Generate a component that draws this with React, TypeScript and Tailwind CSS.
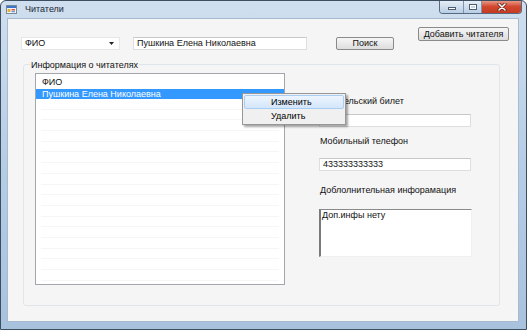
import React from "react";

function AppIcon() {
  return (
    <svg width="11" height="9" viewBox="0 0 11 9">
      <rect x="0.5" y="0.5" width="10" height="8" fill="#f4f4f4" stroke="#7a8a9c" />
      <rect x="1" y="1" width="9" height="2" fill="#3b74c9" />
      <rect x="1.5" y="4" width="3" height="3" fill="#e8b030" />
      <rect x="5.5" y="4" width="3.5" height="1.5" fill="#d9534f" />
      <rect x="5.5" y="6" width="3.5" height="1.2" fill="#5ba0e0" />
    </svg>
  );
}

function TextBox({ w, text, className = "" }: { w: string; text?: string; className?: string }) {
  return (
    <div
      className={`${w} h-[13px] bg-white border border-[#dedede] border-t-[#c8c8c8] flex items-center pl-[3px] leading-[11px] ${className}`}
    >
      {text}
    </div>
  );
}

export default function App() {
  const gridRows = Array.from({ length: 17 });
  return (
    <div className="w-[529px] h-[332px] bg-white font-['Liberation_Sans',Arial,sans-serif] text-[9px] leading-[11px] text-[#111]">
      <div className="w-[527px] h-[330px] flex flex-col rounded-t-[6px] border border-[#3e4e61] bg-gradient-to-b from-[#cfdfef] via-[#b6cde6] to-[#a8c2de] overflow-hidden">
        {/* Title bar */}
        <div className="h-[17px] flex items-start shrink-0">
          <div className="ml-[5px] mt-[4px]">
            <AppIcon />
          </div>
          <div className="ml-[8px] mt-[3px] text-[9px] text-[#1b2633]">Читатели</div>
          <div className="ml-auto mr-[4px] -mt-[1px] flex h-[14px] border border-[#566a82] border-t-0 rounded-b-[4px] overflow-hidden">
            <div className="w-[24px] h-full bg-gradient-to-b from-[#e9f0f8] to-[#b9cde3] border-r border-[#7f93ab] flex items-center justify-center">
              <div className="w-[8px] h-[3px] mt-[4px] bg-white border border-[#4b5d72]" />
            </div>
            <div className="w-[18px] h-full bg-gradient-to-b from-[#e9f0f8] to-[#b9cde3] border-r border-[#7f93ab] flex items-center justify-center">
              <div className="w-[8px] h-[6px] border border-[#4b5d72] bg-white flex items-center justify-center">
                <div className="w-[4px] h-[2px] bg-[#c8d6e6]" />
              </div>
            </div>
            <div className="w-[39px] h-full bg-gradient-to-b from-[#eba392] via-[#d1472f] to-[#c43b22] flex items-center justify-center">
              <svg width="10" height="8" viewBox="0 0 10 8">
                <path d="M2 1 L8 7 M8 1 L2 7" stroke="#5a1a10" strokeWidth="3" strokeLinecap="round" />
                <path d="M2 1 L8 7 M8 1 L2 7" stroke="#ffffff" strokeWidth="1.6" strokeLinecap="round" />
              </svg>
            </div>
          </div>
        </div>

        {/* Client area */}
        <div className="ml-[6px] w-[512px] h-[304px] bg-[#f5f5f5] border border-[#a7bbd0] shrink-0">
          {/* Top row */}
          <div className="flex items-start">
            <div className="ml-[13px] mt-[18px] w-[99px] h-[13px] bg-white border border-[#e6e6e6] flex items-center justify-between pl-[3px] pr-[5px]">
              <span>ФИО</span>
              <svg width="5" height="3" viewBox="0 0 5 3">
                <path d="M0 0 L5 0 L2.5 3 Z" fill="#222" />
              </svg>
            </div>
            <TextBox w="w-[174px]" text="Пушкина Елена Николаевна" className="ml-[13px] mt-[18px]" />
            <button className="ml-[29px] mt-[18px] w-[58px] h-[13px] rounded-[2px] border border-[#8a8a8a] bg-gradient-to-b from-[#f6f6f6] to-[#dddddd] flex items-center justify-center leading-[11px]">
              Поиск
            </button>
            <button className="ml-[24px] mt-[8px] w-[91px] h-[14px] rounded-[2px] border border-[#8a8a8a] bg-gradient-to-b from-[#f6f6f6] to-[#dddddd] flex items-center justify-center leading-[11px]">
              Добавить читателя
            </button>
          </div>

          {/* Group box */}
          <div className="mt-[14px] ml-[15px] w-[477px] h-[242px] border border-[#dfe5ea] rounded-[3px]">
            <div className="-mt-[5px] ml-[6px] w-fit px-[1px] bg-[#f5f5f5] leading-[11px]">Информация о читателях</div>
            <div className="flex items-start mt-[2px]">
              {/* List view */}
              <div className="ml-[11px] w-[250px] h-[212px] bg-white border border-[#a3a6aa] relative">
                <div className="pt-[2px]">
                  <div className="h-[12px] pl-[6px] flex items-center">ФИО</div>
                  <div className="mt-[1px] h-[10px] pl-[6px] flex items-center bg-[#3399ff] text-white">
                    Пушкина Елена Николаевна
                  </div>
                  <div className="mx-[5px]">
                    {gridRows.map((_, i) => (
                      <div key={i} className="h-[10.7px] border-b border-[#f6f6f6]" />
                    ))}
                  </div>
                </div>

                {/* Context menu */}
                <div className="absolute left-[206px] top-[19px] w-[104px] h-[32px] bg-[#f0f0f0] border border-[#979797] p-[1px] shadow-[2px_2px_2px_rgba(0,0,0,0.35)] z-10">
                  <div className="h-[14px] rounded-[2px] border border-[#a9cdf3] bg-gradient-to-b from-[#edf5fd] to-[#d4e6fb] pl-[26px] flex items-center text-[#000]">
                    Изменить
                  </div>
                  <div className="h-[14px] pl-[27px] flex items-center text-[#000]">Удалить</div>
                </div>
              </div>

              {/* Right column */}
              <div className="ml-[34px] flex flex-col">
                <div className="mt-[23px] pl-[1px] leading-[11px]">Читательский билет</div>
                <TextBox w="w-[152px]" className="mt-[7px]" />
                <div className="mt-[9px] pl-[1px] leading-[11px]">Мобильный телефон</div>
                <TextBox w="w-[152px]" text="433333333333" className="mt-[11px]" />
                <div className="mt-[14px] pl-[1px] leading-[11px]">Доблолнительная инфорамация</div>
                <div className="mt-[13px] w-[153px] h-[48px] bg-white border-t border-l-2 border-t-[#8a8a8a] border-l-[#7a7a7a] border-r border-b border-r-[#f0f0f0] border-b-[#f0f0f0] pl-[1px] leading-[11px]">
                  Доп.инфы нету
                </div>
              </div>
            </div>
          </div>
        </div>
      </div>
    </div>
  );
}
